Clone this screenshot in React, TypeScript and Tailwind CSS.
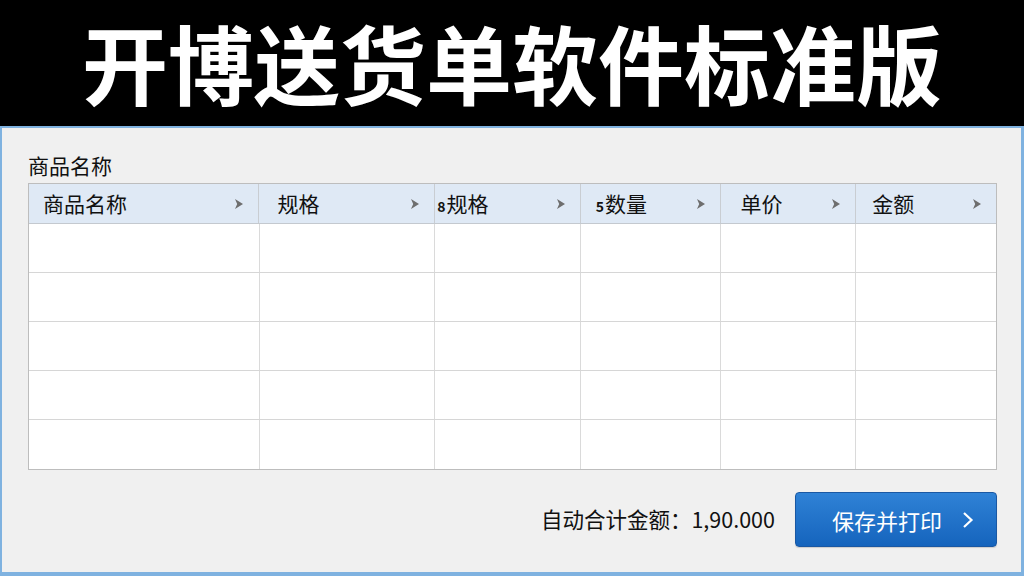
const cols = [
  { label: "商品名称", w: "w-[231px]", pl: "pl-[14px]", pre: "" },
  { label: "规格", w: "w-[176px]", pl: "pl-[18px]", pre: "" },
  { label: "规格", w: "w-[146px]", pl: "pl-[2px]", pre: "8" },
  { label: "数量", w: "w-[140px]", pl: "pl-[15px]", pre: "5" },
  { label: "单价", w: "w-[136px]", pl: "pl-[20px]", pre: "" },
  { label: "金额", w: "w-[140px]", pl: "pl-[16px]", pre: "" },
];

const rows = [0, 1, 2, 3, 4];

function Arrow() {
  return (
    <svg width="10" height="12" viewBox="0 0 10 12" className="shrink-0">
      <path d="M1 1 L9 6 L1 11 L3.2 6 Z" fill="#6e6e6e" />
    </svg>
  );
}

export default function App() {
  return (
    <div
      className="w-[1024px] h-[576px] flex flex-col bg-black overflow-hidden"
      style={{ fontFamily: '"Noto Sans CJK SC", "Noto Sans", sans-serif' }}
    >
      {/* title bar */}
      <div className="h-[126px] shrink-0 flex items-center justify-center pb-[2px]">
        <h1 className="text-white text-[86px] font-bold leading-[1.2] tracking-[0px]">
          开博送货单软件标准版
        </h1>
      </div>

      {/* window */}
      <div className="flex-1 bg-[#f0f0f0] border-2 border-[#7fb2e0] border-r-[3px] border-b-[4px] pl-[26px] pr-[22px] pt-[22px] flex flex-col">
        <div className="text-[21px] leading-[30px] text-[#111] h-[33px]">商品名称</div>

        <div className="border border-[#bdbdbd] bg-white w-[969px]">
          {/* header */}
          <div className="flex h-[40px] bg-[#dfe9f5] border-b border-[#c4c9cf]">
            {cols.map((c, i) => (
              <div
                key={i}
                className={`${c.w} ${c.pl} pr-[14px] flex items-center justify-between ${
                  i < cols.length - 1 ? "border-r border-[#c9cdd2]" : ""
                }`}
              >
                <span className="text-[21px] text-[#111] leading-none flex items-baseline">
                  {c.pre && <span className="text-[14px] font-bold mr-[1px]">{c.pre}</span>}
                  {c.label}
                </span>
                <Arrow />
              </div>
            ))}
          </div>

          {/* body rows */}
          {rows.map((r) => (
            <div
              key={r}
              className={`flex h-[49px] ${r < rows.length - 1 ? "border-b border-[#d6d6d6]" : ""}`}
            >
              {cols.map((c, i) => (
                <div
                  key={i}
                  className={`${c.w} ${i < cols.length - 1 ? "border-r border-[#dadada]" : ""}`}
                />
              ))}
            </div>
          ))}
        </div>

        {/* footer */}
        <div className="flex items-center justify-end mt-[22px] w-[969px]">
          <span className="text-[21.5px] text-[#111] mr-[20px]">自动合计金额：1,90.000</span>
          <button className="w-[202px] h-[55px] rounded-[4px] border border-[#1a58a3] bg-gradient-to-b from-[#2f82d6] to-[#1564bd] text-white flex items-center pl-[36px] pr-[22px] justify-between shadow-[0_1px_1px_rgba(0,0,0,0.15)]">
            <span className="text-[22px] leading-none">保存并打印</span>
            <svg width="12" height="18" viewBox="0 0 12 18">
              <path d="M2 2 L9.5 9 L2 16" fill="none" stroke="white" strokeWidth="2.2" />
            </svg>
          </button>
        </div>
      </div>
    </div>
  );
}
